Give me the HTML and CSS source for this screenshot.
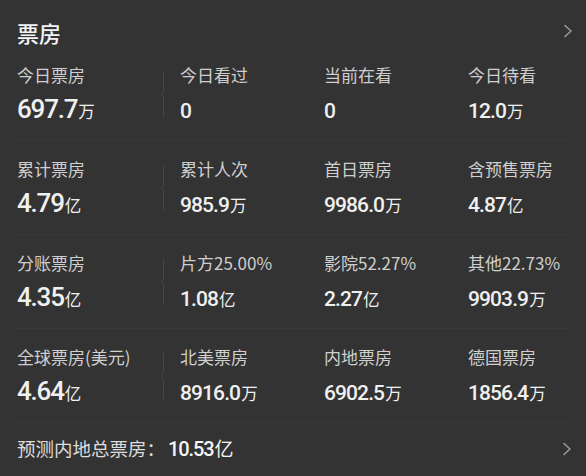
FILE: index.html
```html
<!DOCTYPE html>
<html lang="zh-CN">
<head>
<meta charset="utf-8">
<title>票房</title>
<link rel="stylesheet" href="styles.css">
</head>
<body>
<div class="card">
  <div class="head">
    <span class="title">票房</span>
    <svg class="chev" width="10" height="14" viewBox="0 0 10 14"><path d="M2 1.5 L8 7 L2 12.5" /></svg>
  </div>

  <div class="row">
    <div class="lbl c1 r1">今日票房</div>
    <svg class="divider" width="6" height="46" viewBox="0 0 6 46"><path d="M4.5 0 V20 L2.3 23 L4.5 26 V46" /></svg>
    <div class="lbl c3 r1">今日看过</div>
    <div class="lbl c4 r1">当前在看</div>
    <div class="lbl c5 r1">今日待看</div>
    <div class="val big c1 r2">697.7<span class="u">万</span></div>
    <div class="val c3 r2">0</div>
    <div class="val c4 r2">0</div>
    <div class="val c5 r2">12.0<span class="u">万</span></div>
  </div>

  <div class="row">
    <div class="lbl c1 r1">累计票房</div>
    <svg class="divider" width="6" height="46" viewBox="0 0 6 46"><path d="M4.5 0 V20 L2.3 23 L4.5 26 V46" /></svg>
    <div class="lbl c3 r1">累计人次</div>
    <div class="lbl c4 r1">首日票房</div>
    <div class="lbl c5 r1">含预售票房</div>
    <div class="val big c1 r2">4.79<span class="u">亿</span></div>
    <div class="val c3 r2">985.9<span class="u">万</span></div>
    <div class="val c4 r2">9986.0<span class="u">万</span></div>
    <div class="val c5 r2">4.87<span class="u">亿</span></div>
  </div>

  <div class="row">
    <div class="lbl c1 r1">分账票房</div>
    <svg class="divider" width="6" height="46" viewBox="0 0 6 46"><path d="M4.5 0 V20 L2.3 23 L4.5 26 V46" /></svg>
    <div class="lbl c3 r1">片方25.00%</div>
    <div class="lbl c4 r1">影院52.27%</div>
    <div class="lbl c5 r1">其他22.73%</div>
    <div class="val big c1 r2">4.35<span class="u">亿</span></div>
    <div class="val c3 r2">1.08<span class="u">亿</span></div>
    <div class="val c4 r2">2.27<span class="u">亿</span></div>
    <div class="val c5 r2">9903.9<span class="u">万</span></div>
  </div>

  <div class="row">
    <div class="lbl c1 r1">全球票房(美元)</div>
    <svg class="divider" width="6" height="46" viewBox="0 0 6 46"><path d="M4.5 0 V20 L2.3 23 L4.5 26 V46" /></svg>
    <div class="lbl c3 r1">北美票房</div>
    <div class="lbl c4 r1">内地票房</div>
    <div class="lbl c5 r1">德国票房</div>
    <div class="val big c1 r2">4.64<span class="u">亿</span></div>
    <div class="val c3 r2">8916.0<span class="u">万</span></div>
    <div class="val c4 r2">6902.5<span class="u">万</span></div>
    <div class="val c5 r2">1856.4<span class="u">万</span></div>
  </div>

  <div class="foot">
    <div class="foot-text"><span class="foot-lbl">预测内地总票房：</span><span class="foot-num">10.53</span><span class="foot-u">亿</span></div>
    <svg class="chev" width="10" height="14" viewBox="0 0 10 14"><path d="M2 1.5 L8 7 L2 12.5" /></svg>
  </div>
</div>
</body>
</html>
```

FILE: styles.css
```css
html, body {
  margin: 0;
  padding: 0;
  background: #333333;
}

.card {
  width: 586px;
  height: 476px;
  background: #333333;
  font-family: "Noto Sans CJK SC", "Noto Sans", sans-serif;
  color: #f2f2f2;
  overflow: hidden;
}

.head {
  display: flex;
  justify-content: space-between;
  align-items: center;
  padding: 19px 13px 2px 17px;
}

.title {
  font-size: 22px;
  line-height: 26px;
  font-weight: 500;
  color: #f4f4f4;
}

.chev {
  display: block;
  margin-top: -3px;
}

.chev path {
  fill: none;
  stroke: #9a9a9a;
  stroke-width: 1.6;
  stroke-linecap: round;
  stroke-linejoin: round;
}

.row {
  display: grid;
  grid-template-columns: 142px 21px 144px 144px 1fr;
  grid-template-rows: 20px 30px;
  row-gap: 9px;
  align-items: baseline;
  margin: 0 15px;
  padding: 18px 0 16px 2px;
  border-bottom: 1px solid #383838;
}

.c1 { grid-column: 1; }
.c3 { grid-column: 3; }
.c4 { grid-column: 4; }
.c5 { grid-column: 5; }
.r1 { grid-row: 1; }
.r2 { grid-row: 2; }

.divider {
  grid-column: 2;
  grid-row: 1 / span 2;
  align-self: start;
  margin-top: 6px;
  display: block;
}

.divider path {
  fill: none;
  stroke: #474747;
  stroke-width: 1;
}

.lbl {
  font-size: 17px;
  line-height: 20px;
  color: #cfcfcf;
  white-space: nowrap;
}

.val {
  font-family: Roboto, "Noto Sans", sans-serif;
  font-weight: 500;
  font-size: 21px;
  line-height: 30px;
  letter-spacing: -0.9px;
  color: #f0f0f0;
  white-space: nowrap;
}

.val.big {
  font-size: 26px;
  letter-spacing: -1.2px;
}

.u {
  font-family: "Noto Sans CJK SC", sans-serif;
  font-weight: 400;
  font-size: 16.5px;
  letter-spacing: 0;
  margin-left: 1px;
}

.foot {
  display: flex;
  justify-content: space-between;
  align-items: center;
  padding: 14px 14px 0 17px;
}

.foot-text {
  font-size: 18.5px;
  line-height: 22px;
  white-space: nowrap;
}

.foot-lbl {
  color: #dcdcdc;
}

.foot-num {
  font-family: Roboto, sans-serif;
  font-weight: 500;
  font-size: 20px;
  letter-spacing: -1.1px;
  color: #f4f4f4;
  margin-left: 3px;
}

.foot-u {
  font-size: 19px;
  color: #f4f4f4;
  margin-left: 1px;
}

.foot .chev {
  margin-top: 0;
}
```
